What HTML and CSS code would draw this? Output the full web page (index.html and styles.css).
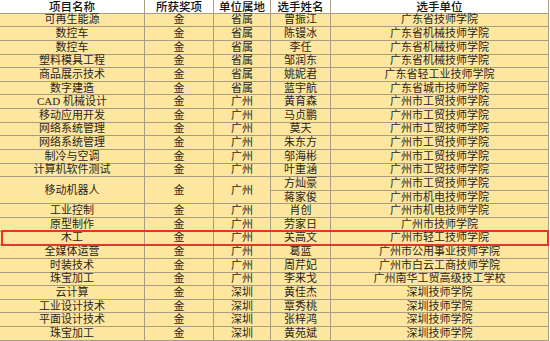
FILE: index.html
```html
<!DOCTYPE html>
<html lang="zh">
<head>
<meta charset="utf-8">
<link rel="stylesheet" href="styles.css">
</head>
<body>
<div class="wrap">
  <div class="grid">
    <div class="c h">项目名称</div><div class="c h">所获奖项</div><div class="c h">单位属地</div><div class="c h">选手姓名</div><div class="c h">选手单位</div>

    <div class="c">可再生能源</div><div class="c">金</div><div class="c">省属</div><div class="c">曾振江</div><div class="c">广东省技师学院</div>
    <div class="c">数控车</div><div class="c">金</div><div class="c">省属</div><div class="c">陈镘冰</div><div class="c">广东省机械技师学院</div>
    <div class="c">数控车</div><div class="c">金</div><div class="c">省属</div><div class="c">李任</div><div class="c">广东省机械技师学院</div>
    <div class="c">塑料模具工程</div><div class="c">金</div><div class="c">省属</div><div class="c">邹润东</div><div class="c">广东省机械技师学院</div>
    <div class="c">商品展示技术</div><div class="c">金</div><div class="c">省属</div><div class="c">姚妮君</div><div class="c">广东省轻工业技师学院</div>
    <div class="c">数字建造</div><div class="c">金</div><div class="c">省属</div><div class="c">蓝宇航</div><div class="c">广东省城市技师学院</div>
    <div class="c">CAD 机械设计</div><div class="c">金</div><div class="c">广州</div><div class="c">黄育森</div><div class="c">广州市工贸技师学院</div>
    <div class="c">移动应用开发</div><div class="c">金</div><div class="c">广州</div><div class="c">马贞鹏</div><div class="c">广州市工贸技师学院</div>
    <div class="c">网络系统管理</div><div class="c">金</div><div class="c">广州</div><div class="c">莫天</div><div class="c">广州市工贸技师学院</div>
    <div class="c">网络系统管理</div><div class="c">金</div><div class="c">广州</div><div class="c">朱东方</div><div class="c">广州市工贸技师学院</div>
    <div class="c">制冷与空调</div><div class="c">金</div><div class="c">广州</div><div class="c">邬海彬</div><div class="c">广州市工贸技师学院</div>
    <div class="c">计算机软件测试</div><div class="c">金</div><div class="c">广州</div><div class="c">叶重涵</div><div class="c">广州市工贸技师学院</div>
    <div class="c span2">移动机器人</div><div class="c span2">金</div><div class="c span2">广州</div><div class="c">方灿豪</div><div class="c">广州市工贸技师学院</div>
    <div class="c">蒋家俊</div><div class="c">广州市机电技师学院</div>
    <div class="c">工业控制</div><div class="c">金</div><div class="c">广州</div><div class="c">肖创</div><div class="c">广州市机电技师学院</div>
    <div class="c">原型制作</div><div class="c">金</div><div class="c">广州</div><div class="c">劳家日</div><div class="c">广州市技师学院</div>
    <div class="c">木工</div><div class="c">金</div><div class="c">广州</div><div class="c">关高文</div><div class="c">广州市轻工技师学院</div>
    <div class="c">全媒体运营</div><div class="c">金</div><div class="c">广州</div><div class="c">葛蓝</div><div class="c">广州市公用事业技师学院</div>
    <div class="c">时装技术</div><div class="c">金</div><div class="c">广州</div><div class="c">周芹妃</div><div class="c">广州市白云工商技师学院</div>
    <div class="c">珠宝加工</div><div class="c">金</div><div class="c">广州</div><div class="c">李来戈</div><div class="c">广州南华工贸高级技工学校</div>
    <div class="c">云计算</div><div class="c">金</div><div class="c">深圳</div><div class="c">黄佳杰</div><div class="c">深圳技师学院</div>
    <div class="c">工业设计技术</div><div class="c">金</div><div class="c">深圳</div><div class="c">覃秀桃</div><div class="c">深圳技师学院</div>
    <div class="c">平面设计技术</div><div class="c">金</div><div class="c">深圳</div><div class="c">张梓鸿</div><div class="c">深圳技师学院</div>
    <div class="c">珠宝加工</div><div class="c">金</div><div class="c">深圳</div><div class="c">黄苑斌</div><div class="c">深圳技师学院</div>
  </div>
  <div class="mark"></div>
</div>
</body>
</html>
```
FILE: styles.css
```css
html, body {
  margin: 0;
  padding: 0;
  background: #ffffff;
}
.wrap {
  position: relative;
  width: 550px;
  height: 341px;
  overflow: hidden;
}
.grid {
  display: grid;
  grid-template-columns: 145px 69px 57px 60px 218px;
  grid-auto-rows: 13.64px;
  width: 549px;
  background: #fde79f;
  font-family: "Liberation Serif", "Noto Sans CJK SC", serif;
  font-size: 11px;
  color: #2a2520;
}
.c {
  display: flex;
  align-items: center;
  justify-content: center;
  box-sizing: border-box;
  border-right: 1px solid #a99c85;
  border-bottom: 1px solid #a99c85;
  line-height: 11px;
  white-space: nowrap;
}
.h {
  background: #ffffff;
  font-family: "Noto Sans CJK SC", sans-serif;
  font-size: 11.5px;
  line-height: 11.5px;
  font-weight: 500;
  color: #111;
  padding-top: 1px;
}
.span2 {
  grid-row: span 2;
}
.mark {
  position: absolute;
  left: 1px;
  top: 230px;
  width: 548px;
  height: 16px;
  box-sizing: border-box;
  border: 2px solid #e8342c;
}
```
